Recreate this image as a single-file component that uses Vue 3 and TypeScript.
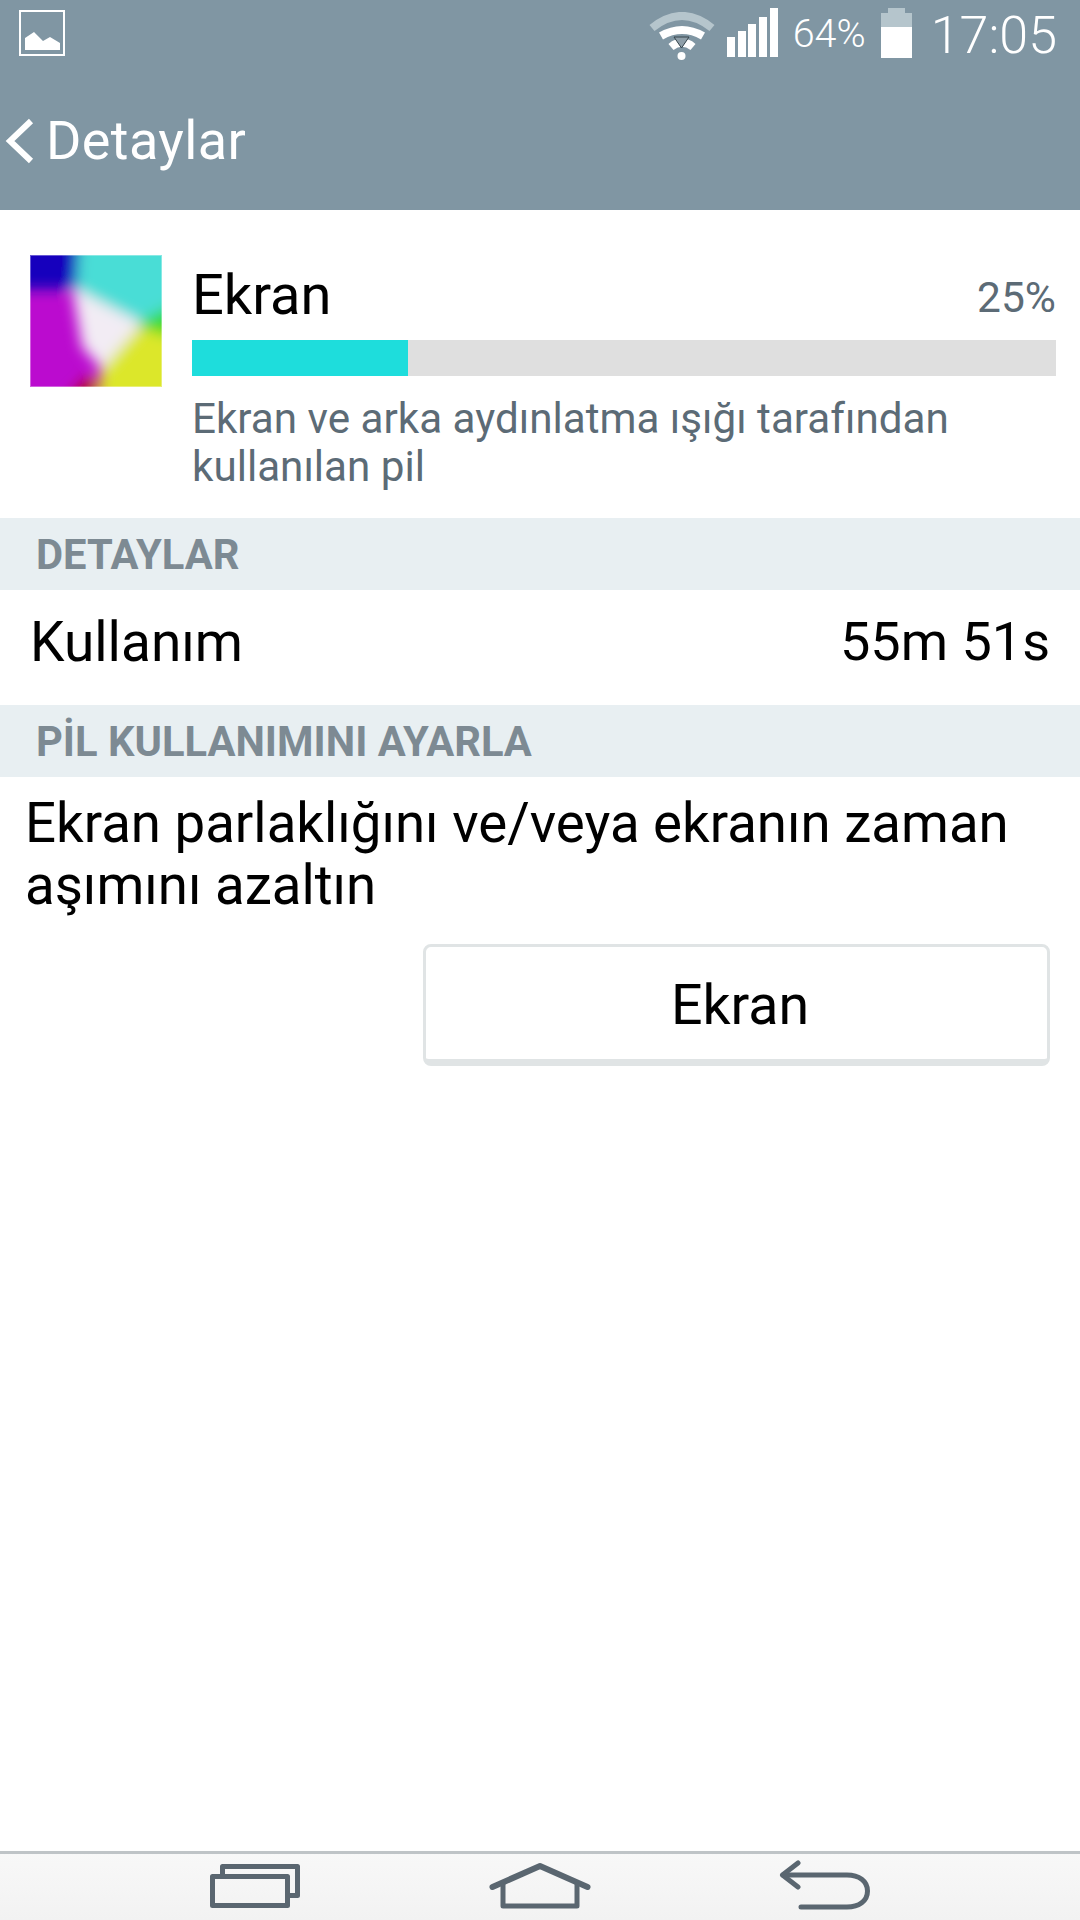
<script setup lang="ts">
const fillPercent = 25
const signalBars = [
  { x: 0, y: 29 },
  { x: 11, y: 23 },
  { x: 21, y: 16 },
  { x: 32, y: 9 },
  { x: 43, y: 0 },
]
</script>

<template>
  <div class="screen">
    <header class="top">
      <div class="status">
        <svg class="pic-icon" width="46" height="46" viewBox="0 0 46 46">
          <rect x="1" y="1" width="44" height="44" fill="none" stroke="#fff" stroke-width="2" />
          <path d="M6 40V28L15 22 24 31 31 27 41 33V40Z" fill="#fff" />
        </svg>
        <div class="status-right">
          <svg class="wifi" width="66" height="48" viewBox="0 0 66 48">
            <path d="M3 16Q33 -8 63 16" fill="none" stroke="#b5c5cc" stroke-width="8" />
            <path d="M12 24Q33 12 54 24" fill="none" stroke="#fff" stroke-width="8" />
            <path d="M22 35Q33 26 44 35" fill="none" stroke="#fff" stroke-width="8" />
            <path d="M25 25H40L32.5 36Z" fill="#8f9fa9" stroke="#33424a" stroke-width="1" />
            <circle cx="32.5" cy="44" r="4" fill="#fff" />
          </svg>
          <svg class="signal" width="51" height="49" viewBox="0 0 51 49">
            <rect v-for="b in signalBars" :key="b.x" :x="b.x" :y="b.y" width="8" :height="49 - b.y" fill="#fff" />
          </svg>
          <span class="pct">64%</span>
          <svg class="battery" width="33" height="50" viewBox="0 0 33 50">
            <path d="M8 0H25V5H32V19H1V5H8Z" fill="#b5c5cc" />
            <rect x="1" y="19" width="31" height="31" fill="#fff" />
          </svg>
          <span class="clock">17:05</span>
        </div>
      </div>
      <div class="title-row">
        <svg width="32" height="46" viewBox="0 0 32 46">
          <path d="M27 3L6 23 27 43" fill="none" stroke="#fff" stroke-width="6" />
        </svg>
        <span class="page-title">Detaylar</span>
      </div>
    </header>

    <section class="summary">
      <svg class="app-icon" width="132" height="132" viewBox="0 0 132 132">
        <defs>
          <filter id="soft" x="-20%" y="-20%" width="140%" height="140%">
            <feGaussianBlur stdDeviation="7" />
          </filter>
          <clipPath id="square"><rect width="132" height="132" /></clipPath>
        </defs>
        <g clip-path="url(#square)">
          <rect width="132" height="132" fill="#bb0bcf" />
          <g filter="url(#soft)">
            <path d="M-30 -30H52L48 34H-30Z" fill="#1403bd" />
            <path d="M50 -30H162V50L108 68 46 34Z" fill="#48ddd6" />
            <path d="M108 68L162 40V100L116 78Z" fill="#38dc2c" />
            <path d="M108 72L162 88V162H68L70 112Z" fill="#dce72c" />
            <path d="M20 162L60 120 78 162Z" fill="#b30a24" />
            <path d="M42 32L112 68 72 114 52 92Z" fill="#f2ecf4" />
          </g>
          <rect x="0.5" y="0.5" width="131" height="131" fill="none" stroke="#fff" stroke-opacity="0.35" />
        </g>
      </svg>
      <div class="summary-main">
        <div class="summary-head">
          <span class="app-name">Ekran</span>
          <span class="app-pct">{{ fillPercent }}%</span>
        </div>
        <div class="bar">
          <div class="bar-fill" :style="{ width: fillPercent + '%' }"></div>
        </div>
        <p class="summary-desc">Ekran ve arka aydınlatma ışığı tarafından kullanılan pil</p>
      </div>
    </section>

    <div class="band">DETAYLAR</div>
    <div class="usage-row">
      <span class="usage-label">Kullanım</span>
      <span class="usage-value">55m 51s</span>
    </div>
    <div class="band">PİL KULLANIMINI AYARLA</div>
    <p class="advice">Ekran parlaklığını ve/veya ekranın zaman aşımını azaltın</p>
    <div class="actions">
      <button class="screen-btn" type="button">Ekran</button>
    </div>

    <nav class="navbar">
      <div class="nav-cell">
        <svg width="92" height="50" viewBox="0 0 92 50">
          <path d="M12.5 14V6.5H87.5V35.5H80" fill="none" stroke="#5a6670" stroke-width="5" stroke-linejoin="round" />
          <rect x="2.5" y="16.5" width="75" height="29" fill="none" stroke="#5a6670" stroke-width="5" stroke-linejoin="round" />
        </svg>
      </div>
      <div class="nav-cell">
        <svg width="102" height="50" viewBox="0 0 102 50">
          <path d="M3.5 27L51 6 98.5 27" fill="none" stroke="#5a6670" stroke-width="6" stroke-linecap="round" stroke-linejoin="round" />
          <path d="M14 23V46H88V23" fill="none" stroke="#5a6670" stroke-width="5" stroke-linejoin="round" />
        </svg>
      </div>
      <div class="nav-cell">
        <svg width="91" height="50" viewBox="0 0 91 50">
          <path d="M19 3L3.5 15 19 27" fill="none" stroke="#5a6670" stroke-width="5" stroke-linecap="round" stroke-linejoin="round" />
          <path d="M4 15H68C80 15 88.5 21 88.5 31 88.5 41 80 47 68 47H22" fill="none" stroke="#5a6670" stroke-width="5" stroke-linecap="round" />
        </svg>
      </div>
    </nav>
  </div>
</template>

<style scoped>
.screen {
  width: 1080px;
  height: 1920px;
  display: flex;
  flex-direction: column;
  background: #fff;
  font-family: Roboto, "Liberation Sans", sans-serif;
  color: #000;
  overflow: hidden;
}
.top {
  height: 210px;
  background: #8096a3;
  color: #fff;
  display: flex;
  flex-direction: column;
}
.status {
  height: 66px;
  display: flex;
  justify-content: space-between;
  align-items: flex-start;
  padding: 10px 23px 0 19px;
  box-sizing: border-box;
}
.status-right {
  display: flex;
  align-items: flex-start;
}
.wifi {
  margin-top: 2px;
  margin-right: 12px;
}
.signal {
  margin-top: -2px;
  margin-right: 15px;
}
.pct {
  font-size: 39.5px;
  font-weight: 300;
  line-height: 46px;
  margin-top: 1px;
  margin-right: 14px;
}
.battery {
  margin-top: -2px;
  margin-right: 18px;
}
.clock {
  font-size: 52px;
  font-weight: 300;
  line-height: 60px;
  margin-top: -4px;
}
.title-row {
  display: flex;
  align-items: center;
  padding: 45px 0 0 4px;
  gap: 10px;
}
.page-title {
  font-size: 54px;
  line-height: 60px;
  letter-spacing: 0.4px;
}
.summary {
  height: 308px;
  box-sizing: border-box;
  display: flex;
  padding: 45px 24px 0 30px;
  gap: 30px;
}
.app-icon {
  flex: none;
}
.summary-main {
  flex: 1;
  min-width: 0;
}
.summary-head {
  display: flex;
  justify-content: space-between;
  align-items: flex-end;
  height: 85px;
}
.app-name {
  font-size: 56px;
  line-height: 70px;
  margin-bottom: 10px;
}
.app-pct {
  font-size: 42.5px;
  color: #5c6b76;
  line-height: 50px;
  margin-bottom: 17px;
}
.bar {
  height: 36px;
  background: #dfdfdf;
}
.bar-fill {
  height: 100%;
  background: #1edddc;
}
.summary-desc {
  margin: 19px 0 0;
  font-size: 42.2px;
  line-height: 48px;
  color: #5c6b76;
  width: 820px;
}
.band {
  height: 72px;
  flex: none;
  background: #e8eff2;
  color: #7d8a93;
  font-size: 41.7px;
  font-weight: 700;
  line-height: 74px;
  padding-left: 36px;
}
.usage-row {
  height: 115px;
  flex: none;
  box-sizing: border-box;
  display: flex;
  justify-content: space-between;
  align-items: center;
  padding: 0 30px 12px;
}
.usage-label {
  font-size: 55px;
}
.usage-value {
  font-size: 54px;
}
.advice {
  margin: 15px 0 0 25px;
  width: 1030px;
  font-size: 54.6px;
  line-height: 62px;
}
.actions {
  display: flex;
  justify-content: flex-end;
  padding: 28px 30px 0 0;
}
.screen-btn {
  width: 627px;
  height: 122px;
  background: #fff;
  border: 3px solid #e0e4e5;
  border-bottom-width: 7px;
  border-radius: 8px;
  font-family: inherit;
  font-size: 55.5px;
  color: #000;
  padding: 4px 0 0 7px;
}
.navbar {
  margin-top: auto;
  height: 69px;
  box-sizing: border-box;
  border-top: 3px solid #bfc4c7;
  background: linear-gradient(#f8f8f8, #f2f2f2);
  display: flex;
  justify-content: center;
}
.nav-cell {
  width: 284px;
  display: flex;
  justify-content: center;
  padding-top: 6px;
}
</style>

<style>
body {
  margin: 0;
}
</style>
